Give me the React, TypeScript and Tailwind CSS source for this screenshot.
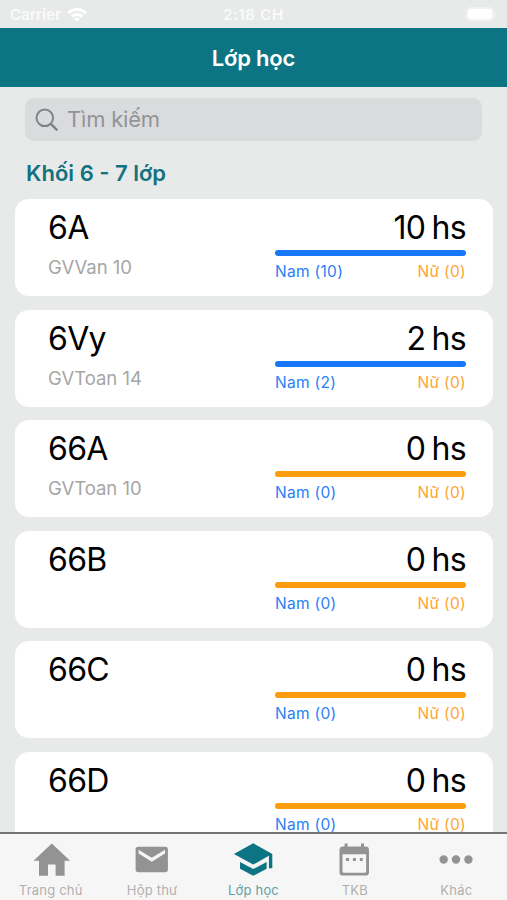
import clsx from 'clsx';

interface ClassRoom {
  name: string;
  teacher: string;
  male: number;
  female: number;
}

const classes: ClassRoom[] = [
  { name: '6A', teacher: 'GVVan 10', male: 10, female: 0 },
  { name: '6Vy', teacher: 'GVToan 14', male: 2, female: 0 },
  { name: '66A', teacher: 'GVToan 10', male: 0, female: 0 },
  { name: '66B', teacher: '', male: 0, female: 0 },
  { name: '66C', teacher: '', male: 0, female: 0 },
  { name: '66D', teacher: '', male: 0, female: 0 },
];

const tabs = [
  { label: 'Trang chủ', icon: <HomeIcon /> },
  { label: 'Hộp thư', icon: <MailIcon /> },
  { label: 'Lớp học', icon: <SchoolIcon />, active: true },
  { label: 'TKB', icon: <CalendarIcon /> },
  { label: 'Khác', icon: <MoreIcon /> },
];

function HomeIcon() {
  return (
    <svg width="40" height="34" viewBox="0 0 40 34" fill="currentColor">
      <path d="M17 33.700V22.500h7.600v11.200h9V18.800h5.500L20.800 1.600 2.500 18.800H8v14.900z" />
    </svg>
  );
}

function MailIcon() {
  return (
    <svg width="40" height="34" viewBox="0 0 40 34" fill="currentColor">
      <path
        fillRule="evenodd"
        d="M6.400 4.700h26.700a2.800 2.800 0 0 1 2.800 2.800v20a2.800 2.800 0 0 1-2.800 2.800H6.400a2.800 2.800 0 0 1-2.800-2.800v-20a2.800 2.800 0 0 1 2.800-2.800zM6.600 7.700V11.500L19.800 19.700 33 11.500V7.700L19.800 15.800z"
      />
    </svg>
  );
}

function SchoolIcon() {
  return (
    <svg width="40" height="34" viewBox="0 0 40 34" fill="currentColor">
      <path d="M7 19.900V26.800L20.200 33.800L33.600 26.800V19.900L20.200 27.100z" />
      <path d="M20.200 1.200L.9 11.900L20.200 22.600L35.900 13.800V26.200H39.300V11.900z" />
    </svg>
  );
}

function CalendarIcon() {
  return (
    <svg width="40" height="34" viewBox="0 0 40 34" fill="currentColor">
      <path
        fillRule="evenodd"
        d="M9.600 1.400h3v3.200H26V1.400h3v3.200h1.600a3.400 3.400 0 0 1 3.400 3.400v22.200a3.400 3.400 0 0 1-3.400 3.400H7.900a3.400 3.400 0 0 1-3.400-3.400V8a3.400 3.400 0 0 1 3.400-3.400h1.700zM7.500 12.300V29.500a1.300 1.300 0 0 0 1.300 1.300H29.800a1.300 1.300 0 0 0 1.300-1.300V12.300z"
      />
      <path d="M11 16.100h3v3h-3zM17.900 16.100h3v3h-3zM24.800 16.100h3v3h-3z" />
    </svg>
  );
}

function MoreIcon() {
  return (
    <svg width="40" height="34" viewBox="0 0 40 34" fill="currentColor">
      <circle cx="7.700" cy="17.500" r="4.200" />
      <circle cx="20" cy="17.500" r="4.200" />
      <circle cx="32.400" cy="17.500" r="4.200" />
    </svg>
  );
}

function StatusBar() {
  return (
    <div className="h-7 shrink-0 grid grid-cols-3 items-center px-2.5 text-[15px] font-medium text-white/85">
      <div className="flex items-center gap-1.5 pt-0.5">
        <span className="tracking-[0.2px]">Carrier</span>
        <svg width="20" height="14" viewBox="0 0 20 14" fill="none" stroke="white" strokeWidth="3">
          <path d="M1.200 5.200a12.500 12.500 0 0 1 17.600 0M4.600 8.600a7.700 7.700 0 0 1 10.800 0" />
          <path d="M10 13.800 7 10.900a4.300 4.300 0 0 1 6 0z" fill="white" stroke="none" />
        </svg>
      </div>
      <span className="pt-0.5 text-center tracking-[0.7px]">2:18 CH</span>
      <div className="flex items-center justify-end gap-px">
        <div className="h-3.5 w-7 rounded-[5px] bg-[#f1f2f2] p-0.5">
          <div className="h-full rounded-[3px] bg-white" />
        </div>
        <div className="h-1 w-0.5 rounded-r bg-[#f1f2f2]" />
      </div>
    </div>
  );
}

function ClassCard({ item }: { item: ClassRoom }) {
  const total = item.male + item.female;
  const malePercent = total > 0 ? (item.male / total) * 100 : 0;

  return (
    <div className="h-[97px] shrink-0 flex justify-between rounded-[14px] bg-white pl-[33px] pr-[27px] pt-2">
      <div>
        <h3 className="text-[32px] leading-[41px] tracking-[-0.7px] text-black">{item.name}</h3>
        <p className="mt-[7px] text-[18.500px] leading-6 text-[#a6a6a6]">{item.teacher}</p>
      </div>
      <div className="w-[191px]">
        <p className="text-right text-[32px] leading-[41px] tracking-[-0.7px] [word-spacing:-2px] text-black">
          {total} hs
        </p>
        <div className="mt-0.5 h-1.5 overflow-hidden rounded-full bg-[#fd9c0d]">
          <div className="h-full bg-[#1777f8]" style={{ width: `${malePercent}%` }} />
        </div>
        <div className="mt-[5px] flex justify-between text-[15.500px] leading-[21px] tracking-[0.3px]">
          <span className="text-[#2a80f5]">Nam ({item.male})</span>
          <span className="text-[#fda632]">Nữ ({item.female})</span>
        </div>
      </div>
    </div>
  );
}

export default function App() {
  return (
    <div className="flex h-[900px] w-[507px] flex-col overflow-hidden bg-[#e8eaea] font-[Inter,'Noto_Sans',sans-serif]">
      <StatusBar />

      {/* Header */}
      <header className="h-[59px] shrink-0 flex items-center justify-center bg-[#0c7482] pt-px">
        <h1 className="text-[22px] font-semibold tracking-[-0.2px] text-white">Lớp học</h1>
      </header>

      <main className="flex min-h-0 flex-1 flex-col overflow-hidden">
        {/* Search */}
        <div className="mx-[25px] mt-[11px] h-[43px] shrink-0 flex items-center rounded-[9px] bg-[#dadbdd] pl-2.5">
          <svg width="24" height="24" viewBox="0 0 24 24" fill="none" stroke="#818286" strokeWidth="2">
            <circle cx="9.800" cy="9.800" r="8.300" />
            <path d="m15.800 15.800 6.500 6.500" strokeWidth="2.500" />
          </svg>
          <span className="ml-2 text-[22px] tracking-[-0.2px] text-[#929397]">Tìm kiếm</span>
        </div>

        <h2 className="ml-[26px] mt-4 shrink-0 text-[22px] leading-[32px] font-semibold text-[#14717e]">
          Khối 6 - 7 lớp
        </h2>

        {/* Class list */}
        <div className="mt-2.5 flex flex-col gap-[13.500px] pl-[15px] pr-3.5">
          {classes.map((item) => (
            <ClassCard key={item.name} item={item} />
          ))}
        </div>
      </main>

      {/* Bottom tabs */}
      <nav className="h-[68px] shrink-0 grid grid-cols-5 border-t-2 border-[#747575] bg-[#f6f6f6]">
        {tabs.map((tab) => (
          <div
            key={tab.label}
            className={clsx('flex flex-col items-center pt-2', tab.active ? 'text-[#0c7482]' : 'text-[#939393]')}
          >
            {tab.icon}
            <span
              className={clsx(
                'mt-1.5 text-[13px] leading-4 tracking-[0.2px] whitespace-nowrap',
                tab.active ? 'text-[#5e9fa7]' : 'text-[#b0b0b0]'
              )}
            >
              {tab.label}
            </span>
          </div>
        ))}
      </nav>
    </div>
  );
}
